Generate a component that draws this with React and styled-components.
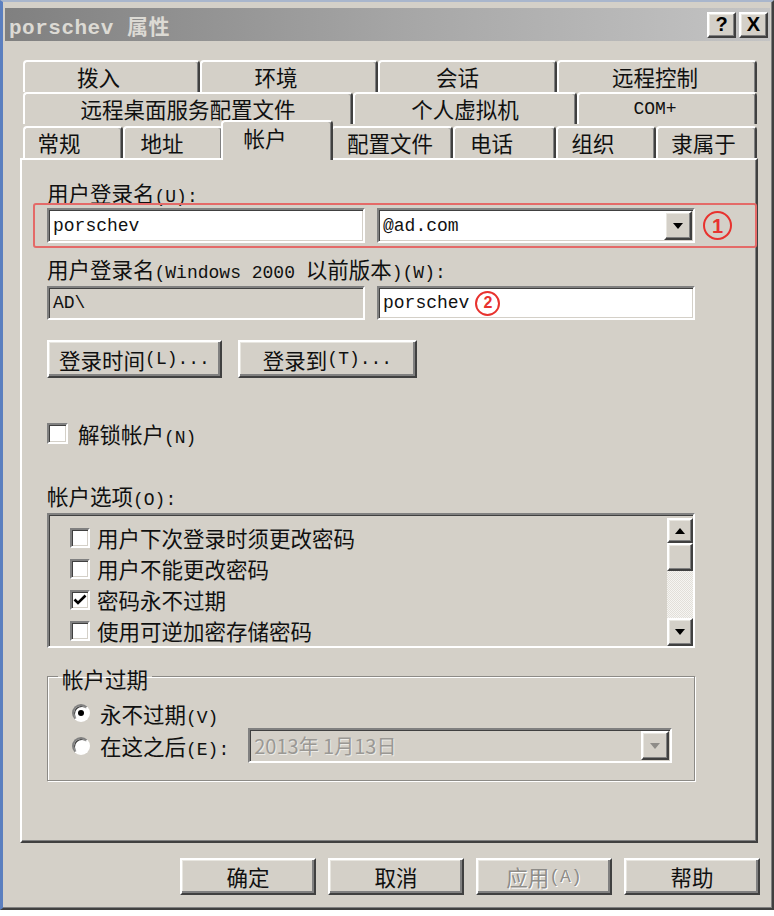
import React from "react";
import styled, { createGlobalStyle, css } from "styled-components";

const FACE = "#d4d0c8";
const SHADOW = "#808080";
const DARK = "#404040";

const GlobalStyle = createGlobalStyle`
  html, body { margin: 0; padding: 0; background: #ffffff; }
  * { box-sizing: border-box; }
`;

const raised = css`
  background: ${FACE};
  border: 2px solid;
  border-color: #ffffff ${DARK} ${DARK} #ffffff;
  box-shadow: inset -1px -1px 0 ${SHADOW}, inset 1px 1px 0 #e8e6e0;
`;

const sunken = css`
  border: 2px solid;
  border-color: ${SHADOW} #ffffff #ffffff ${SHADOW};
  box-shadow: inset 1px 1px 0 ${DARK}, inset -1px -1px 0 ${FACE};
`;

const Window = styled.div`
  width: 774px;
  height: 910px;
  background: ${FACE};
  border-left: 3px solid #5b7fbf;
  border-top: 2px solid #a9b6cc;
  border-right: 2px solid ${DARK};
  border-bottom: 2px solid ${DARK};
  box-shadow: inset -1px -1px 0 ${SHADOW};
  padding: 6px 2px 0 2px;
  display: flex;
  flex-direction: column;
  font-family: "Noto Sans CJK SC", "Noto Sans", sans-serif;
  font-size: 21.5px;
  color: #101010;
`;

const TitleBar = styled.div`
  height: 33px;
  display: flex;
  align-items: center;
  justify-content: space-between;
  padding: 0 2px 0 4px;
  background: linear-gradient(to right, #808080 0%, #a8a8a8 55%, #c4c4c4 100%);
`;

const Title = styled.div`
  font-family: "Liberation Mono", "Noto Sans CJK SC", monospace;
  font-weight: bold;
  font-size: 21px;
  color: #dcdad4;
  letter-spacing: 0.5px;
`;

const CaptionButtons = styled.div`
  display: flex;
  gap: 3px;
`;

const CaptionButton = styled.div`
  ${raised};
  width: 29px;
  height: 26px;
  display: flex;
  align-items: center;
  justify-content: center;
  font-family: "Liberation Sans", Arial, sans-serif;
  font-weight: bold;
  font-size: 20px;
  color: #000;
`;

const Body = styled.div`
  flex: 1;
  display: flex;
  flex-direction: column;
  padding: 0 12px 0 15px;
`;

const TabStrip = styled.div`
  margin-top: 19px;
  padding-left: 3px;
  display: flex;
  flex-direction: column;
`;

const TabRow = styled.div`
  display: flex;
  align-items: flex-end;
  height: ${(p) => p.$h}px;
`;

const Tab = styled.div`
  position: relative;
  width: ${(p) => (p.$active ? p.$w + 4 : p.$w)}px;
  height: ${(p) => (p.$active ? 40 : 32)}px;
  margin: 0 ${(p) => (p.$active ? -2 : 0)}px ${(p) => (p.$active ? -2 : 0)}px;
  z-index: ${(p) => (p.$active ? 2 : 1)};
  background: ${FACE};
  border-top: 2px solid #ffffff;
  border-left: 2px solid #ffffff;
  border-right: 2px solid ${DARK};
  border-radius: 4px 4px 0 0;
  box-shadow: inset -1px 0 0 ${SHADOW};
  display: flex;
  align-items: center;
  justify-content: center;
  padding-right: ${(p) => p.$shift * 2}px;
  padding-bottom: ${(p) => (p.$active ? 6 : 0)}px;
  line-height: 26px;
  white-space: nowrap;
`;

const Panel = styled.div`
  position: relative;
  z-index: 1;
  height: 685px;
  background: ${FACE};
  border: 2px solid;
  border-color: #ffffff ${DARK} ${DARK} #ffffff;
  box-shadow: inset -1px -1px 0 ${SHADOW};
  padding: 22px 0 0 25px;
  display: flex;
  flex-direction: column;
  align-items: flex-start;
`;

const Label = styled.div`
  height: 22px;
  line-height: 22px;
  margin-top: ${(p) => p.$mt || 0}px;
  white-space: nowrap;
`;

const Lat = styled.span`
  font-family: "Liberation Mono", "DejaVu Sans Mono", monospace;
  font-size: ${(p) => p.$size || 18}px;
`;

const Annotated = styled.div`
  margin: -1px 0 0 -14px;
  width: 724px;
  height: 45px;
  border: 2px solid #e46a68;
  border-radius: 3px;
  padding: 3px 0 3px 12px;
  display: flex;
  align-items: center;
`;

const FieldRow = styled.div`
  margin-top: ${(p) => p.$mt || 0}px;
  display: flex;
  align-items: center;
  gap: ${(p) => p.$gap || 0}px;
`;

const Field = styled.div`
  ${sunken};
  width: ${(p) => p.$w}px;
  height: ${(p) => p.$h || 35}px;
  margin-left: ${(p) => p.$ml || 0}px;
  background: ${(p) => (p.$disabled ? FACE : "#ffffff")};
  display: flex;
  align-items: center;
  padding-left: 4px;
  font-family: "Liberation Mono", "DejaVu Sans Mono", monospace;
  font-size: 18px;
  color: #111;
  white-space: nowrap;
`;

const FieldText = styled.span`
  flex: 1;
`;

const DateText = styled.span`
  flex: 1;
  font-family: "Noto Sans CJK SC", sans-serif;
  font-size: 20px;
  color: #9a9894;
  text-shadow: 1px 1px 0 #ecebe7;
`;

const ArrowButton = styled.div`
  ${raised};
  width: 28px;
  align-self: stretch;
  margin: 1px 1px 1px 0;
  display: flex;
  align-items: center;
  justify-content: center;
`;

const Badge = styled.div`
  width: ${(p) => p.$size}px;
  height: ${(p) => p.$size}px;
  margin-left: ${(p) => p.$ml || 0}px;
  border: 2.5px solid #e8322e;
  border-radius: 50%;
  color: #e8322e;
  font-family: "Liberation Sans", Arial, sans-serif;
  font-weight: bold;
  font-size: ${(p) => p.$size - 9}px;
  line-height: 1;
  display: flex;
  align-items: center;
  justify-content: center;
  flex-shrink: 0;
`;

const PushButton = styled.div`
  background: ${FACE};
  width: ${(p) => p.$w}px;
  height: ${(p) => p.$h || 38}px;
  border: 2px solid;
  border-color: #ffffff ${DARK} ${DARK} #ffffff;
  box-shadow: inset -2px -2px 0 ${SHADOW}, inset 1px 1px 0 #e8e6e0;
  display: flex;
  align-items: center;
  justify-content: center;
  white-space: nowrap;
  color: ${(p) => (p.$disabled ? "#8e8c88" : "#101010")};
  text-shadow: ${(p) => (p.$disabled ? "1px 1px 0 #ffffff" : "none")};
`;

const CheckRow = styled.div`
  margin-top: ${(p) => p.$mt || 0}px;
  height: ${(p) => p.$h || 22}px;
  display: flex;
  align-items: center;
  gap: ${(p) => p.$gap || 10}px;
  white-space: nowrap;
`;

const CheckBox = styled.div`
  ${sunken};
  width: ${(p) => p.$size}px;
  height: ${(p) => p.$size}px;
  background: #ffffff;
  display: flex;
  align-items: center;
  justify-content: center;
  flex-shrink: 0;
`;

const ListBox = styled.div`
  ${sunken};
  margin-top: 6px;
  width: 648px;
  height: 135px;
  background: ${FACE};
  display: flex;
`;

const ListItems = styled.div`
  flex: 1;
  padding: 7px 0 0 21px;
  display: flex;
  flex-direction: column;
`;

const ListItem = styled.div`
  height: 31px;
  display: flex;
  align-items: center;
  gap: 7px;
  white-space: nowrap;
`;

const ScrollBar = styled.div`
  width: 26px;
  height: 128px;
  margin-top: 3px;
  display: flex;
  flex-direction: column;
`;

const ScrollButton = styled.div`
  ${raised};
  height: ${(p) => p.$h}px;
  display: flex;
  align-items: center;
  justify-content: center;
`;

const ScrollTrack = styled.div`
  flex: 1;
  background-color: #ebe9e4;
  background-image: repeating-conic-gradient(#f6f5f2 0% 25%, #e2dfd9 0% 50%);
  background-size: 2px 2px;
`;

const Group = styled.fieldset`
  margin: 14px 0 0 0;
  padding: 10px 0 0 24px;
  width: 648px;
  height: 119px;
  min-inline-size: 0;
  border: 1px solid #8c8a86;
  box-shadow: inset 1px 1px 0 #ffffff, 1px 1px 0 #ffffff;
  display: flex;
  flex-direction: column;
`;

const Legend = styled.legend`
  margin-left: -14px;
  padding: 6px 4px 0 4px;
  line-height: 22px;
`;

const Radio = styled.div`
  width: 18px;
  height: 18px;
  border-radius: 50%;
  border: 2px solid;
  border-color: ${SHADOW} #ffffff #ffffff ${SHADOW};
  box-shadow: inset 1px 1px 0 ${DARK};
  background: #ffffff;
  display: flex;
  align-items: center;
  justify-content: center;
  flex-shrink: 0;
`;

const RadioDot = styled.div`
  width: 6px;
  height: 6px;
  border-radius: 50%;
  background: #000;
`;

const Footer = styled.div`
  margin: 15px -2px 0 0;
  display: flex;
  justify-content: flex-end;
  gap: 12px;
`;

const DownArrow = ({ color = "#000" }) => (
  <svg width="10" height="6" viewBox="0 0 10 6">
    <path d="M0 0 H10 L5 6 Z" fill={color} />
  </svg>
);

const UpArrow = () => (
  <svg width="10" height="6" viewBox="0 0 10 6">
    <path d="M0 6 H10 L5 0 Z" fill="#000" />
  </svg>
);

const CheckMark = () => (
  <svg width="14" height="12" viewBox="0 0 14 12">
    <path d="M1.5 5.5 L5 9 L12.5 1.5" fill="none" stroke="#000" strokeWidth="2.6" />
  </svg>
);

const tabRows = [
  {
    h: 32,
    tabs: [
      ["拨入", 177, 13],
      ["环境", 178, 13],
      ["会话", 179, 10],
      ["远程控制", 200, 2],
    ],
  },
  {
    h: 32,
    tabs: [
      ["远程桌面服务配置文件", 330, 0],
      ["个人虚拟机", 224, 0],
      [<Lat key="c">COM+</Lat>, 180, 12],
    ],
  },
  {
    h: 34,
    tabs: [
      ["常规", 100, 14],
      ["地址", 100, 11],
      ["帐户", 108, 12, true],
      ["配置文件", 122, 2],
      ["电话", 103, 13],
      ["组织", 100, 13],
      ["隶属于", 101, 3],
    ],
  },
];

const options = [
  ["用户下次登录时须更改密码", false],
  ["用户不能更改密码", false],
  ["密码永不过期", true],
  ["使用可逆加密存储密码", false],
];

export default function App() {
  return (
    <>
      <GlobalStyle />
      <Window>
        <TitleBar>
          <Title>porschev 属性</Title>
          <CaptionButtons>
            <CaptionButton>?</CaptionButton>
            <CaptionButton>X</CaptionButton>
          </CaptionButtons>
        </TitleBar>
        <Body>
          <TabStrip>
            {tabRows.map((row, i) => (
              <TabRow key={i} $h={row.h}>
                {row.tabs.map(([label, w, shift, active], j) => (
                  <Tab key={j} $w={w} $shift={shift} $active={!!active}>
                    {label}
                  </Tab>
                ))}
              </TabRow>
            ))}
          </TabStrip>

          <Panel>
            <Label>
              用户登录名<Lat>(U):</Lat>
            </Label>
            <Annotated>
              <Field $w={318}>
                <FieldText>porschev</FieldText>
              </Field>
              <Field $w={318} $ml={12}>
                <FieldText>@ad.com</FieldText>
                <ArrowButton>
                  <DownArrow />
                </ArrowButton>
              </Field>
              <Badge $size={29} $ml={8}>1</Badge>
            </Annotated>

            <Label $mt={10}>
              用户登录名<Lat>(Windows 2000 </Lat>以前版本<Lat>)(W):</Lat>
            </Label>
            <FieldRow $mt={6} $gap={12}>
              <Field $w={318} $h={34} $disabled>
                <FieldText>AD\</FieldText>
              </Field>
              <Field $w={318} $h={34}>
                porschev
                <Badge $size={25} $ml={6}>2</Badge>
              </Field>
            </FieldRow>

            <FieldRow $mt={20} $gap={16}>
              <PushButton $w={175}>
                登录时间<Lat>(L)...</Lat>
              </PushButton>
              <PushButton $w={179}>
                登录到<Lat>(T)...</Lat>
              </PushButton>
            </FieldRow>

            <CheckRow $mt={44}>
              <CheckBox $size={21} />
              <span>
                解锁帐户<Lat>(N)</Lat>
              </span>
            </CheckRow>

            <Label $mt={41}>
              帐户选项<Lat>(O):</Lat>
            </Label>
            <ListBox>
              <ListItems>
                {options.map(([text, checked]) => (
                  <ListItem key={text}>
                    <CheckBox $size={20}>{checked && <CheckMark />}</CheckBox>
                    {text}
                  </ListItem>
                ))}
              </ListItems>
              <ScrollBar>
                <ScrollButton $h={25}>
                  <UpArrow />
                </ScrollButton>
                <ScrollButton $h={28} />
                <ScrollTrack />
                <ScrollButton $h={28}>
                  <DownArrow />
                </ScrollButton>
              </ScrollBar>
            </ListBox>

            <Group>
              <Legend>帐户过期</Legend>
              <CheckRow $h={26}>
                <Radio>
                  <RadioDot />
                </Radio>
                <span>
                  永不过期<Lat>(V)</Lat>
                </span>
              </CheckRow>
              <CheckRow $h={35} $mt={2}>
                <Radio />
                <span>
                  在这之后<Lat>(E):</Lat>
                </span>
                <Field $w={424} $h={35} $ml={9} $disabled>
                  <DateText>2013年 1月13日</DateText>
                  <ArrowButton>
                    <DownArrow color="#8e8c88" />
                  </ArrowButton>
                </Field>
              </CheckRow>
            </Group>
          </Panel>

          <Footer>
            <PushButton $w={136} $h={37}>确定</PushButton>
            <PushButton $w={136} $h={37}>取消</PushButton>
            <PushButton $w={136} $h={37} $disabled>
              应用<Lat>(A)</Lat>
            </PushButton>
            <PushButton $w={136} $h={37}>帮助</PushButton>
          </Footer>
        </Body>
      </Window>
    </>
  );
}
